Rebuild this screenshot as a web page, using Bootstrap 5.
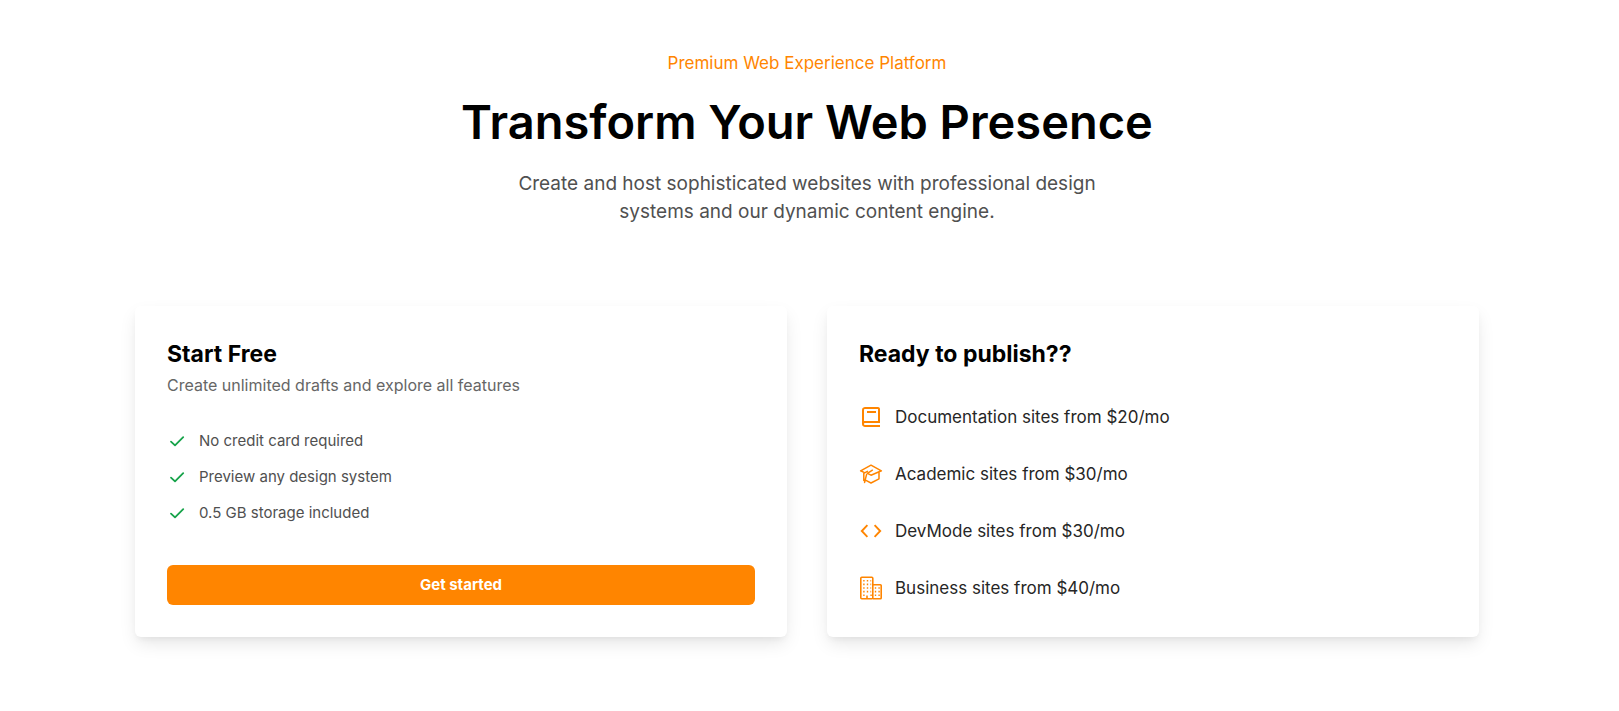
<!DOCTYPE html>
<html lang="en">
<head>
<meta charset="utf-8">
<meta name="viewport" content="width=device-width, initial-scale=1">
<title>Transform Your Web Presence</title>
<link href="https://cdn.jsdelivr.net/npm/bootstrap@5.3.0/dist/css/bootstrap.min.css" rel="stylesheet">
<style>
  :root { --brand: #ff8500; }
  body { font-family: Inter, "Liberation Sans", sans-serif; background: #fff; color: #000; padding-right: 5px; }
  .page-wrap { max-width: 1344px; padding-top: 50px; padding-bottom: 48px; }
  .tagline { font-size: 17px; line-height: 26px; color: var(--brand); }
  .hero-title { font-size: 47px; line-height: 60px; font-weight: 600; margin-bottom: 18px; }
  .hero-copy { font-size: 19px; line-height: 28px; color: #505050; max-width: 640px; }
  .plan-grid { --bs-gutter-x: 40px; margin-top: 80px; row-gap: 40px; }
  .plan { border: 0; border-radius: 6px; box-shadow: 0 8px 18px -2px rgba(0, 0, 0, .1), 0 4px 6px -2px rgba(0, 0, 0, .05); }
  .plan-body { padding: 32px; }
  .plan-title { font-size: 23px; line-height: 32px; font-weight: 700; }
  .plan-note { font-size: 16px; line-height: 24px; color: #666; margin-top: 3px; margin-bottom: 32px; }
  .check-list { gap: 12px; font-size: 15px; line-height: 24px; color: #505050; }
  .check-list svg { width: 20px; height: 20px; color: #16a34a; }
  .site-list { gap: 29px; margin-top: 33px; font-size: 17px; line-height: 28px; color: #262626; }
  .site-list svg { width: 24px; height: 24px; color: var(--brand); }
  .btn-brand { --bs-btn-color: #fff; --bs-btn-bg: var(--brand); --bs-btn-hover-color: #fff; --bs-btn-hover-bg: #e67800; --bs-btn-active-bg: #cc6a00; --bs-btn-active-color: #fff; font-size: 15px; line-height: 24px; font-weight: 700; padding: 8px 16px; border: 0; border-radius: 6px; }
</style>
</head>
<body>
<main class="page-wrap container-fluid px-0">
  <header class="text-center">
    <p class="tagline mb-3">Premium Web Experience Platform</p>
    <h1 class="hero-title">Transform Your Web Presence</h1>
    <p class="hero-copy mx-auto mb-0">Create and host sophisticated websites with professional design systems and our dynamic content engine.</p>
  </header>

  <div class="plan-grid row row-cols-1 row-cols-lg-2">
    <section class="col">
      <div class="card plan h-100">
        <div class="plan-body d-flex flex-column">
          <h2 class="plan-title mb-0">Start Free</h2>
          <p class="plan-note">Create unlimited drafts and explore all features</p>
          <ul class="check-list list-unstyled d-flex flex-column mb-4 pb-3">
            <li class="d-flex align-items-center gap-2"><svg class="me-1" viewBox="0 0 20 20" fill="none" stroke="currentColor" stroke-width="1.8" stroke-linecap="round" stroke-linejoin="round" aria-hidden="true"><path d="M4 10.6 8 14.4 16.2 6.2"/></svg>No credit card required</li>
            <li class="d-flex align-items-center gap-2"><svg class="me-1" viewBox="0 0 20 20" fill="none" stroke="currentColor" stroke-width="1.8" stroke-linecap="round" stroke-linejoin="round" aria-hidden="true"><path d="M4 10.6 8 14.4 16.2 6.2"/></svg>Preview any design system</li>
            <li class="d-flex align-items-center gap-2"><svg class="me-1" viewBox="0 0 20 20" fill="none" stroke="currentColor" stroke-width="1.8" stroke-linecap="round" stroke-linejoin="round" aria-hidden="true"><path d="M4 10.6 8 14.4 16.2 6.2"/></svg>0.5 GB storage included</li>
          </ul>
          <button type="button" class="btn btn-brand w-100">Get started</button>
        </div>
      </div>
    </section>

    <section class="col">
      <div class="card plan h-100">
        <div class="plan-body">
          <h2 class="plan-title mb-0">Ready to publish??</h2>
          <ul class="site-list list-unstyled d-flex flex-column mb-0">
            <li class="d-flex align-items-center"><svg class="me-2" viewBox="0 0 24 24" fill="currentColor" aria-hidden="true"><path d="M6 22h15v-2H6.012C5.55 19.988 5 19.805 5 19s.55-.988 1.012-1H21V4c0-1.103-.897-2-2-2H6c-1.206 0-3 .799-3 3v14c0 2.201 1.794 3 3 3zM5 8V5c0-.805.55-.988 1-1h13v12H5V8z"/><path d="M8 6h9v2H8z"/></svg><span class="ms-1">Documentation sites from $20/mo</span></li>
            <li class="d-flex align-items-center"><svg class="me-2" viewBox="0 0 24 24" fill="none" stroke="currentColor" stroke-width="1.5" stroke-linejoin="round" stroke-linecap="round" aria-hidden="true"><path d="M1.6 8.8 12 3.2 22.4 8.8 12 13.2 8.4 11.4 13.4 8.2M1.6 8.8 5 10.4M20 10.4v6.4L12 21 7 18.4M4.8 18.4V11.4L8.4 9.4M5.6 20.4 7.6 12.4M4.8 15v-3.6"/></svg><span class="ms-1">Academic sites from $30/mo</span></li>
            <li class="d-flex align-items-center"><svg class="me-2" viewBox="0 0 24 24" fill="none" stroke="currentColor" stroke-width="1.9" aria-hidden="true"><path d="M8.4 6.2 2.8 12l5.6 5.8M15.6 6.2 21.2 12l-5.6 5.8"/></svg><span class="ms-1">DevMode sites from $30/mo</span></li>
            <li class="d-flex align-items-center"><svg class="me-2" viewBox="0 0 24 24" fill="none" stroke="currentColor" stroke-width="1.6" stroke-linejoin="round" aria-hidden="true"><rect x="1.8" y="1.2" width="12" height="21.6" rx="1"/><path d="M13.8 8.8H21.4q.8 0 .8.8V22q0 .8-.8.8H13.8M8 22.8v-3.4"/><path stroke-dasharray="1.4 2.2" d="M4.2 4.8h8M4.2 8.4h8M4.2 12h8M4.2 15.6h8M4.2 19.2h3M11.4 19.2h1.4M15.8 12h5M15.8 15.6h5M15.8 19.2h5"/></svg><span class="ms-1">Business sites from $40/mo</span></li>
          </ul>
        </div>
      </div>
    </section>
  </div>
</main>
<script src="https://cdn.jsdelivr.net/npm/bootstrap@5.3.0/dist/js/bootstrap.bundle.min.js"></script>
</body>
</html>
